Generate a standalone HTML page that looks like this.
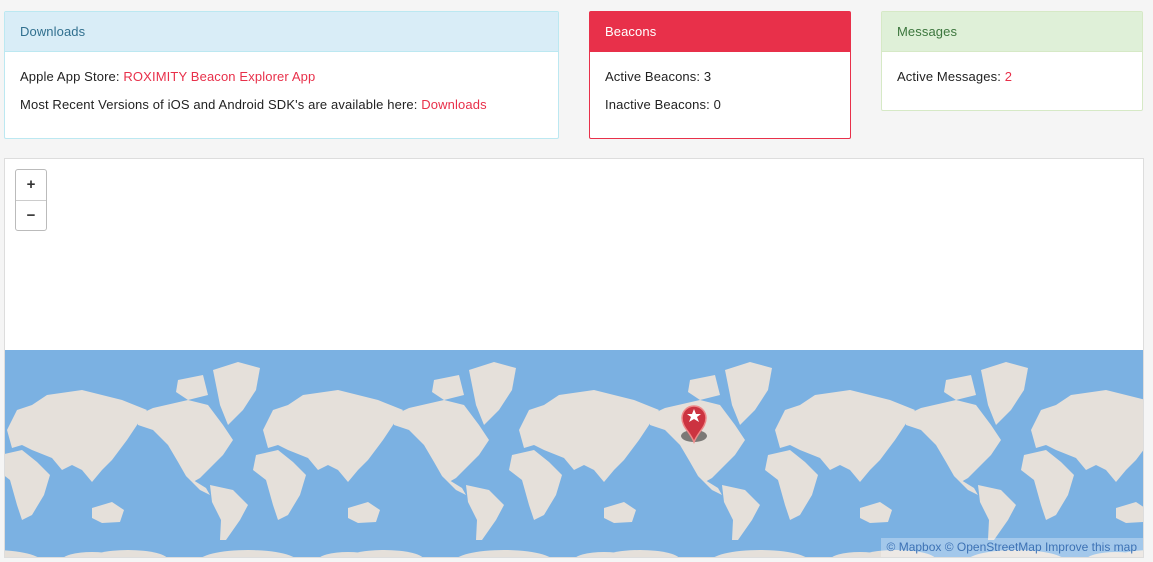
<!DOCTYPE html>
<html><head><meta charset="utf-8"><style>
*{box-sizing:border-box;margin:0;padding:0}
body{width:1153px;height:562px;background:#f5f5f5;font-family:"Liberation Sans",sans-serif;font-size:13px;color:#222;position:relative;overflow:hidden}
.p{position:absolute;background:#fff;border:1px solid;border-radius:2px}
.h{height:40px;line-height:39px;padding-left:15px;font-size:13px;border-bottom:1px solid;letter-spacing:.1px}
.b{padding:17px 15px 0;letter-spacing:.13px}
.b p{margin-bottom:13px;line-height:15px}
a{color:#e8304a;text-decoration:none}
#map{position:absolute;left:4px;top:158px;width:1140px;height:400px;background:#fff;border:1px solid #ddd;overflow:hidden}
.z{position:absolute;left:10px;top:10px;width:32px;height:62px;border:1px solid #bbb;border-radius:3px;background:#fff}
.z div{height:30px;line-height:30px;text-align:center;font-weight:bold;font-size:15px;color:#333}
.z div+div{border-top:1px solid #ccc}
.attr{position:absolute;right:0;bottom:0;background:rgba(255,255,255,.3);color:#3d72b5;font-size:12px;padding:2px 6px;line-height:15px}
</style></head><body>
<div class="p" style="left:4px;top:11px;width:555px;height:128px;border-color:#bce8f1">
<div class="h" style="background:#d9edf7;color:#31708f;border-color:#bce8f1">Downloads</div>
<div class="b"><p>Apple App Store: <a>ROXIMITY Beacon Explorer App</a></p><p>Most Recent Versions of iOS and Android SDK's are available here: <a>Downloads</a></p></div></div>
<div class="p" style="left:589px;top:11px;width:262px;height:128px;border-color:#e8304a">
<div class="h" style="background:#e8304a;color:#fff;border-color:#e8304a">Beacons</div>
<div class="b"><p>Active Beacons: 3</p><p>Inactive Beacons: 0</p></div></div>
<div class="p" style="left:881px;top:11px;width:262px;height:100px;border-color:#d6e9c6">
<div class="h" style="background:#dff0d8;color:#3c763d;border-color:#d6e9c6">Messages</div>
<div class="b"><p>Active Messages: <a>2</a></p></div></div>
<div id="map">
<svg width="1140" height="400" style="position:absolute;left:0;top:0">
<defs><g id="w" fill="#e5e0da">
<polygon points="650,415 665,408 700,400 720,405 735,425 745,440 735,455 720,470 712,478 705,482 698,476 690,462 680,445 665,430 650,425"/>
<polygon points="698,476 712,490 722,495 718,488 705,480"/>
<polygon points="725,370 750,362 772,368 768,390 755,410 740,425 732,405 728,385"/>
<polygon points="690,380 715,375 720,395 700,400 688,392"/>
<polygon points="722,485 745,490 760,505 752,520 738,540 732,540 733,520 724,502"/>
<polygon points="775,430 785,410 800,405 815,395 850,390 890,400 915,410 905,425 895,440 880,460 870,470 860,482 850,470 840,465 830,470 820,458 800,450 790,445 780,448"/>
<polygon points="768,455 790,450 805,462 818,475 812,495 800,515 790,520 785,505 778,480 765,470"/>
<polygon points="860,508 880,502 892,510 888,522 870,523 860,518"/>
<ellipse cx="640" cy="560" rx="40" ry="10"/><ellipse cx="760" cy="562" rx="50" ry="12"/><ellipse cx="860" cy="560" rx="30" ry="8"/>
</g></defs>
<rect x="0" y="191" width="1140" height="209" fill="#7bb1e2"/>
<g transform="translate(-5,-159)">
<use href="#w" transform="translate(-768,0)"/><use href="#w" transform="translate(-512,0)"/><use href="#w" transform="translate(-256,0)"/><use href="#w"/><use href="#w" transform="translate(256,0)"/><use href="#w" transform="translate(512,0)"/>
<ellipse cx="694" cy="436" rx="13" ry="6" fill="#333" opacity=".6"/>
<path d="M694 442 C690 432 682 427 682 418 A12 12 0 0 1 706 418 C706 427 698 432 694 442Z" fill="#cc3340" stroke="#e88" stroke-width="1.5"/>
<polygon points="694,409 696,414 701,414 697,417 699,422 694,419 689,422 691,417 687,414 692,414" fill="#fff"/>
</g></svg>
<div class="z"><div>+</div><div>−</div></div>
<div class="attr">© Mapbox © OpenStreetMap Improve this map</div>
</div>
</body></html>
